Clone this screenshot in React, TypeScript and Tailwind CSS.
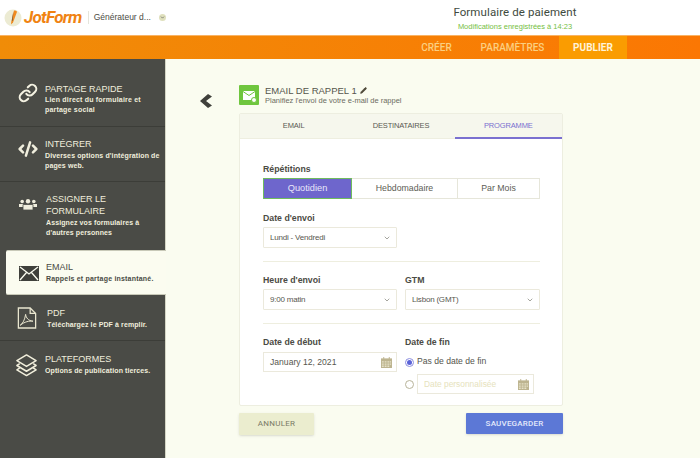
import React from 'react';
import { ChevronDown, CodeXml, Link, Pencil } from 'lucide-react';

const MailIcon = () => (
  <svg viewBox="0 0 20 15" className="w-[20px] h-[15px]">
    <path d="M0 0h20v15H0z" fill="#3f403b" />
    <path d="M1 1l9 7 9-7M1 14l6.500-7.500M19 14l-6.500-7.500" fill="none" stroke="#fbfcf0" strokeWidth="1.300" />
  </svg>
);

const PdfIcon = () => (
  <svg viewBox="0 0 22 24" className="w-[20px] h-[22px]" fill="none" stroke="#e9e6cf" strokeWidth="1.400">
    <path d="M1.500 1h13l6 6v16h-19z" />
    <path d="M14.500 1v6h6" />
    <path d="M3.500 20c3-2 5-6 6-12 .5 4 3 7 8 7.500-4-.500-9 .500-14 4.500z" strokeWidth="1.100" />
  </svg>
);

const LayersIcon = () => (
  <svg viewBox="0 0 24 24" className="w-[23px] h-[24px]" fill="none" stroke="#f2efdc" strokeWidth="1.600" strokeLinejoin="round">
    <path d="M12 1.500l10 6-10 6-10-6z" />
    <path d="M5 10.500l-3 2 10 6 10-6-3-2" />
    <path d="M5 15l-3 2 10 6 10-6-3-2" />
  </svg>
);

const UsersIcon = () => (
  <svg viewBox="0 0 18 11" className="w-[18px] h-[11px]" fill="#f0eedd">
    <circle cx="3.200" cy="2.500" r="1.800" />
    <circle cx="14.800" cy="2.500" r="1.800" />
    <circle cx="9" cy="2.200" r="2.200" />
    <path d="M0 5h5v3H0zM13 5h5v3h-5z" />
    <path d="M4 5.500h10V11H4z" stroke="#4a4b46" strokeWidth="0.800" />
  </svg>
);

const BackIcon = () => (
  <svg viewBox="0 0 12 14" className="w-[12px] h-[14px]" fill="#3f403b">
    <path d="M8 0l4 2.500L6 7l6 4.500L8 14 0 7z" />
  </svg>
);

const CalendarIcon = () => (
  <svg viewBox="0 0 12 12" className="w-[11px] h-[11px]">
    <path d="M0 1.500h12V12H0z" fill="#bdb48f" />
    <path d="M2.500 0h1v2.500h-1zM8.500 0h1v2.500h-1z" fill="#bdb48f" />
    <path d="M1 4.500h2v1.500H1zM4 4.500h2v1.500H4zM7 4.500h2v1.500H7zM9.600 4.500h1.400v1.500H9.600zM1 7h2v1.500H1zM4 7h2v1.500H4zM7 7h2v1.500H7zM9.600 7h1.400v1.500H9.600zM1 9.300h2v1.500H1zM4 9.300h2v1.500H4zM7 9.300h2v1.500H7z" fill="#e6e1c8" />
  </svg>
);

const JotLogo = () => (
  <svg viewBox="0 0 18 18" className="w-[18px] h-[18px]">
    <circle cx="9" cy="9" r="8.500" fill="#ecebd3" />
    <path d="M10 1.500c1.500 0 2.500.5 3 1.200L9 13.500l-2 2 .3-3z" fill="#f08a1d" />
    <path d="M9.300 2.500l-1.500 9 1 .5z" fill="#7a5a3a" />
  </svg>
);

const Select = ({ value }: { value: string }) => (
  <div className="h-[21px] bg-white border border-[#ebe9dc] rounded-[1px] flex items-center justify-between pl-[6px] pr-[5px] text-[8px] tracking-[-0.2px] text-[#57574f]">
    <span>{value}</span>
    <ChevronDown className="w-[8px] h-[8px] text-[#77776c]" strokeWidth={2} />
  </div>
);

const Label = ({ children }: { children: React.ReactNode }) => (
  <div className="text-[8.750px] leading-[11px] font-bold text-[#4b4b44] mb-[3px]">{children}</div>
);

export default function App() {
  return (
    <div className="w-[700px] h-[458px] overflow-hidden flex flex-col bg-[#fafcf0] font-['Liberation_Sans',Arial,sans-serif]">
      <header className="h-[35px] shrink-0 bg-white flex items-center">
        <div className="flex items-center pl-[4px]">
          <JotLogo />
          <span className="ml-[2px] text-[17px] font-bold italic text-[#f08312] tracking-[-0.7px] font-['Roboto',sans-serif]">JotForm</span>
          <span className="ml-[6px] h-[13px] border-l border-[#e5e5dc]" />
          <span className="ml-[5px] text-[8.500px] text-[#4c4c45]">Générateur d...</span>
          <span className="ml-[8px] w-[7px] h-[7px] rounded-full bg-[#dfe0bd] flex items-center justify-center">
            <ChevronDown className="w-[5px] h-[5px] text-[#555]" strokeWidth={3} />
          </span>
        </div>
        <div className="ml-auto mr-[75px] w-[220px] flex flex-col items-center pt-[1px]">
          <span className="text-[11.500px] leading-[14px] tracking-[0.1px] text-[#3e4a40] font-['Roboto',sans-serif]">Formulaire de paiement</span>
          <span className="text-[7.500px] leading-[10px] mt-[3px] text-[#76c043]">Modifications enregistrées à 14:23</span>
        </div>
      </header>

      <nav className="h-[24px] shrink-0 bg-gradient-to-r from-[#f08c08] to-[#fb7703] flex justify-end border-t border-[#f9b364]">
        <div className="flex items-center mr-[73px] text-[10px] font-medium font-['Roboto',sans-serif] text-[#fbcf80]">
          <span className="w-[59px] text-center">CRÉER</span>
          <span className="w-[93px] text-center">PARAMÈTRES</span>
          <span className="w-[68px] h-full bg-[#fa9c01] text-[#fff3d8] font-bold flex items-center justify-center">PUBLIER</span>
        </div>
      </nav>

      <div className="flex-1 flex min-h-0">
        <aside className="w-[166px] shrink-0 bg-[#4a4b46] border-r border-[#d5d6c5] text-[#f0eedd]">
          <div className="flex h-[68px] pt-[24px] pl-[18px] border-b border-[#3c3d38]">
            <Link className="w-[20px] h-[20px] text-[#f4f2e2]" strokeWidth={2.500} />
            <div className="ml-[7px]">
              <div className="text-[9px] leading-[12px]">PARTAGE RAPIDE</div>
              <div className="text-[7px] leading-[10px] font-bold tracking-[0.2px] w-[105px]">Lien direct du formulaire et partage social</div>
            </div>
          </div>
          <div className="flex h-[55px] pt-[11px] pl-[18px] border-b border-[#3c3d38]">
            <CodeXml className="w-[20px] h-[20px] mt-[1px]" strokeWidth={3} />
            <div className="ml-[7px]">
              <div className="text-[9px] leading-[12px]">INTÉGRER</div>
              <div className="mt-[1px] text-[7px] leading-[10px] font-bold tracking-[0.12px] w-[118px]">Diverses options d'intégration de pages web.</div>
            </div>
          </div>
          <div className="flex h-[68px] pt-[11px] pl-[19px]">
            <div className="mt-[6px]"><UsersIcon /></div>
            <div className="ml-[9px]">
              <div className="text-[9px] leading-[12px] w-[90px]">ASSIGNER LE FORMULAIRE</div>
              <div className="mt-[1px] text-[7px] leading-[10px] font-bold tracking-[0.1px] w-[100px]">Assignez vos formulaires à d'autres personnes</div>
            </div>
          </div>
          <div className="ml-[6px] -mr-[1px] h-[45px] bg-[#fbfcf0] border-y border-[#c8c9b8] rounded-l-[2px] flex items-start pt-[10px] pl-[13px] text-[#4a4b44]">
            <div className="mt-[5px]"><MailIcon /></div>
            <div className="ml-[7px]">
              <div className="text-[9px] leading-[12px]">EMAIL</div>
              <div className="mt-[1px] text-[7px] leading-[10px] font-bold tracking-[0.2px]">Rappels et partage instantané.</div>
            </div>
          </div>
          <div className="flex h-[46px] pt-[12px] pl-[17px] border-b border-[#3c3d38]">
            <PdfIcon />
            <div className="ml-[10px]">
              <div className="text-[9px] leading-[12px]">PDF</div>
              <div className="mt-[1px] text-[7px] leading-[10px] font-bold tracking-[0.1px]">Téléchargez le PDF à remplir.</div>
            </div>
          </div>
          <div className="flex pt-[12px] pl-[15px]">
            <LayersIcon />
            <div className="ml-[7px]">
              <div className="text-[9px] leading-[12px]">PLATEFORMES</div>
              <div className="mt-[1px] text-[7px] leading-[10px] font-bold tracking-[0.1px]">Options de publication tierces.</div>
            </div>
          </div>
        </aside>

        <main className="flex-1 flex pl-[34px]">
          <div className="w-[39px] pt-[35px]">
            <BackIcon />
          </div>
          <div className="w-[324px] pt-[26px]">
            <div className="flex items-center h-[20px] mb-[8px]">
              <div className="w-[20px] h-[20px] bg-[#6fc63e] rounded-[1px] flex items-center justify-center relative">
                <svg viewBox="0 0 12 9" className="w-[12px] h-[9px]">
                  <path d="M0 0h12v9H0z" fill="#fff" />
                  <path d="M0 .5l6 4 6-4" fill="none" stroke="#6fc63e" strokeWidth="1" />
                </svg>
                <span className="absolute right-[2px] bottom-[2px] w-[6px] h-[6px] rounded-full bg-white border border-[#6fc63e]" />
              </div>
              <div className="ml-[6px]">
                <div className="flex items-center text-[9.500px] leading-[11px] text-[#55554d]">
                  EMAIL DE RAPPEL 1
                  <Pencil className="ml-[3px] w-[7px] h-[7px] text-[#4f4a3a]" fill="#4f4a3a" />
                </div>
                <div className="text-[7.500px] leading-[9px] text-[#6c6c62]">Planifiez l'envoi de votre e-mail de rappel</div>
              </div>
            </div>

            <div className="border border-[#edeee0] rounded-[2px] bg-white">
              <div className="h-[25px] bg-[#f6f7ed] flex text-[7.500px] tracking-[-0.15px] text-[#5a5a52] border-b border-[#eeeee0]">
                <div className="flex-1 flex items-center justify-center">EMAIL</div>
                <div className="flex-1 flex items-center justify-center">DESTINATAIRES</div>
                <div className="flex-1 flex items-center justify-center text-[#7a70d0] border-b-2 border-[#7a70d0] -mb-[1px]">PROGRAMME</div>
              </div>

              <div className="pl-[23px] pr-[22px] pt-[25px] pb-[11px]">
                <Label>Répétitions</Label>
                <div className="flex h-[21px] text-[8.750px] text-[#5d5d55] mb-[14px]">
                  <div className="w-[89px] bg-[#6e66cc] border border-[#6fbb5e] text-[#e8e6fa] text-[9.250px] flex items-center justify-center">Quotidien</div>
                  <div className="w-[105px] border-y border-[#e6e6da] flex items-center justify-center">Hebdomadaire</div>
                  <div className="flex-1 border border-[#e6e6da] flex items-center justify-center">Par Mois</div>
                </div>

                <Label>Date d'envoi</Label>
                <div className="w-[134px]">
                  <Select value="Lundi - Vendredi" />
                </div>
                <div className="border-t border-[#eeeedf] mt-[13px] mb-[13px]" />

                <div className="flex gap-[8px]">
                  <div className="w-[134px]">
                    <Label>Heure d'envoi</Label>
                    <Select value="9:00 matin" />
                  </div>
                  <div className="flex-1">
                    <Label>GTM</Label>
                    <Select value="Lisbon (GMT)" />
                  </div>
                </div>
                <div className="border-t border-[#eeeedf] mt-[13px] mb-[13px]" />

                <div className="flex gap-[8px]">
                  <div className="w-[134px]">
                    <Label>Date de début</Label>
                    <div className="mt-[4px] h-[20px] bg-white border border-[#ebe9dc] flex items-center justify-between pl-[6px] pr-[4px] text-[8.600px] text-[#57574f]">
                      January 12, 2021
                      <CalendarIcon />
                    </div>
                  </div>
                  <div className="flex-1">
                    <Label>Date de fin</Label>
                    <div className="mt-[4px] flex items-center h-[20px] text-[8.600px] text-[#55554d]">
                      <span className="w-[9px] h-[9px] rounded-full border border-[#8d8ee0] bg-white flex items-center justify-center">
                        <span className="w-[5px] h-[5px] rounded-full bg-[#5a62d8]" />
                      </span>
                      <span className="ml-[3px] -mt-[2px]">Pas de date de fin</span>
                    </div>
                    <div className="flex items-center mt-[2px]">
                      <span className="w-[9px] h-[9px] rounded-full border border-[#b8b49a] bg-white" />
                      <div className="ml-[3px] w-[117px] h-[20px] border border-[#ebe9dc] flex items-center justify-between pl-[6px] pr-[4px] text-[8.400px] text-[#e6e2bd]">
                        Date personnalisée
                        <CalendarIcon />
                      </div>
                    </div>
                  </div>
                </div>
              </div>
            </div>

            <div className="flex justify-between mt-[7px]">
              <div className="w-[75px] h-[22px] bg-[#ebedcf] rounded-[1px] shadow-sm flex items-center justify-center text-[8px] tracking-[0.3px] text-[#7a7a66] font-['Roboto',sans-serif]">ANNULER</div>
              <div className="w-[97px] h-[21px] bg-[#5c78d6] rounded-[1px] shadow-sm flex items-center justify-center text-[8px] font-medium tracking-[0.2px] text-[#e4e9fb] font-['Roboto',sans-serif]">SAUVEGARDER</div>
            </div>
          </div>
        </main>
      </div>
    </div>
  );
}
